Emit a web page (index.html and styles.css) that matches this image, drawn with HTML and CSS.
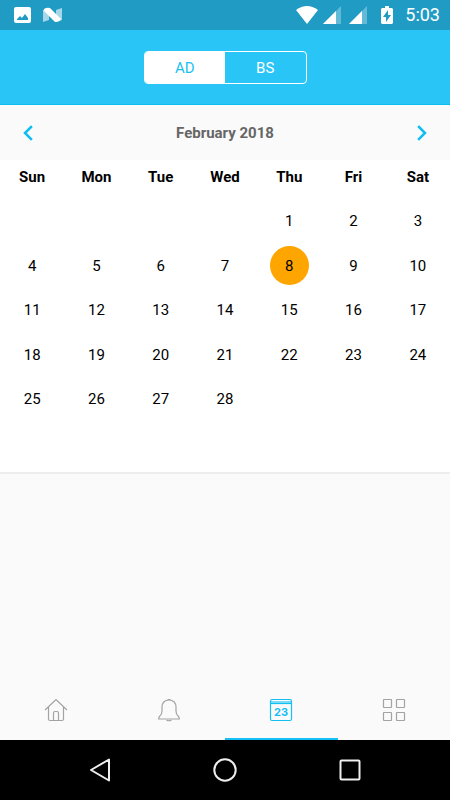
FILE: index.html
```html
<!DOCTYPE html>
<html lang="en">
<head>
  <meta charset="UTF-8">
  <meta name="viewport" content="width=device-width, initial-scale=1">
  <title>Calendar</title>
  <link rel="stylesheet" href="styles.css">
</head>
<body>
  <div class="statusbar">
    <div class="status-left">
      <svg width="17" height="17" viewBox="0 0 17 17">
        <path fill="#fff" fill-rule="evenodd" d="M2 0h13a2 2 0 0 1 2 2v12a2 2 0 0 1-2 2H2a2 2 0 0 1-2-2V2a2 2 0 0 1 2-2zM3 13h11v-2l-3-4-3 4-2-2-3 3z"/>
      </svg>
      <svg width="19" height="16" viewBox="0 0 19 16">
        <path fill="#a5d7e8" d="M0 3l6-2v12l-6 2zM13 3l6-2v12l-6 2z"/>
        <path fill="#fff" d="M1 2Q4 0 7 1l11 11q-1 3-6 3L1 4z"/>
      </svg>
    </div>
    <div class="status-right">
      <svg width="22" height="18" viewBox="0 0 22 18">
        <path fill="#fff" d="M0 4Q11-4 22 4L11 18z"/>
      </svg>
      <svg class="signal" width="18" height="18" viewBox="0 0 18 18">
        <path fill="#62bad6" d="M18 0v18H0z"/>
        <path fill="#fff" d="M13 5v13H0z"/>
      </svg>
      <svg class="signal" width="18" height="18" viewBox="0 0 18 18">
        <path fill="#62bad6" d="M18 0v18H0z"/>
        <path fill="#fff" d="M13 5v13H0z"/>
      </svg>
      <svg class="battery" width="12" height="18" viewBox="0 0 12 18">
        <path fill="#fff" d="M4 0h4v2h3l1 1v14l-1 1H1l-1-1V3l1-1h3z"/>
        <path fill="#209bc3" d="M7 4l-5 7h3v5l5-7H7z"/>
      </svg>
      <span class="clock">5:03</span>
    </div>
  </div>

  <header class="header">
    <div class="switch">
      <button type="button" class="switch-btn active" aria-pressed="true">AD</button>
      <button type="button" class="switch-btn" aria-pressed="false">BS</button>
    </div>
  </header>

  <main class="content">
    <div class="month">
      <button type="button" class="arrow" aria-label="Previous month">
        <svg width="12" height="18" viewBox="0 0 12 18"><path d="M10 3L4 9l6 6"/></svg>
      </button>
      <h1 class="month-name">February 2018</h1>
      <button type="button" class="arrow" aria-label="Next month">
        <svg width="12" height="18" viewBox="0 0 12 18"><path d="M2 3l6 6-6 6"/></svg>
      </button>
    </div>

    <div class="calendar">
      <table class="days">
        <thead>
          <tr><th>Sun</th><th>Mon</th><th>Tue</th><th>Wed</th><th>Thu</th><th>Fri</th><th>Sat</th></tr>
        </thead>
        <tbody>
          <tr>
            <td></td><td></td><td></td><td></td>
            <td><button type="button" class="day">1</button></td>
            <td><button type="button" class="day">2</button></td>
            <td><button type="button" class="day">3</button></td>
          </tr>
          <tr>
            <td><button type="button" class="day">4</button></td>
            <td><button type="button" class="day">5</button></td>
            <td><button type="button" class="day">6</button></td>
            <td><button type="button" class="day">7</button></td>
            <td><button type="button" class="day today">8</button></td>
            <td><button type="button" class="day">9</button></td>
            <td><button type="button" class="day">10</button></td>
          </tr>
          <tr>
            <td><button type="button" class="day">11</button></td>
            <td><button type="button" class="day">12</button></td>
            <td><button type="button" class="day">13</button></td>
            <td><button type="button" class="day">14</button></td>
            <td><button type="button" class="day">15</button></td>
            <td><button type="button" class="day">16</button></td>
            <td><button type="button" class="day">17</button></td>
          </tr>
          <tr>
            <td><button type="button" class="day">18</button></td>
            <td><button type="button" class="day">19</button></td>
            <td><button type="button" class="day">20</button></td>
            <td><button type="button" class="day">21</button></td>
            <td><button type="button" class="day">22</button></td>
            <td><button type="button" class="day">23</button></td>
            <td><button type="button" class="day">24</button></td>
          </tr>
          <tr>
            <td><button type="button" class="day">25</button></td>
            <td><button type="button" class="day">26</button></td>
            <td><button type="button" class="day">27</button></td>
            <td><button type="button" class="day">28</button></td>
            <td></td><td></td><td></td>
          </tr>
          <tr><td></td><td></td><td></td><td></td><td></td><td></td><td></td></tr>
        </tbody>
      </table>
    </div>
  </main>

  <nav class="tabs">
    <a href="#home" class="tab" aria-label="Home">
      <svg width="24" height="24" viewBox="0 0 24 24">
        <path d="M1 12L12 1.500l11 10.500M4.500 9v12q0 1.500 1.500 1.500h12q1.500 0 1.500-1.500V9M9.500 22v-7q0-1.500 1.500-1.500h2q1.500 0 1.500 1.500v7"/>
      </svg>
    </a>
    <a href="#notifications" class="tab" aria-label="Notifications">
      <svg width="24" height="24" viewBox="0 0 24 24">
        <path d="M12 2C7.500 2 5 5 5 9v4c0 3-.8 4-2.300 5.200-.7.600-1 1.200-1 2.800h20.600c0-1.600-.3-2.200-1-2.800C19.800 17 19 16 19 13V9c0-4-2.500-7-7-7z"/>
        <path d="M10.500 1.500h3M9.500 22q2.500 1.500 5 0"/>
      </svg>
    </a>
    <a href="#calendar" class="tab selected" aria-label="Calendar">
      <svg width="24" height="24" viewBox="0 0 24 24">
        <rect class="band" x="1" y="3" width="22" height="2"/>
        <rect x="1.500" y="1.500" width="21" height="21" rx="1.500"/>
        <path d="M1.500 5.500h21"/>
        <text class="tab-date" x="12" y="18" text-anchor="middle">23</text>
      </svg>
    </a>
    <a href="#more" class="tab" aria-label="More">
      <svg width="24" height="24" viewBox="0 0 24 24">
        <rect x="1.500" y="1.500" width="8" height="8" rx=".5"/>
        <rect x="14.500" y="1.500" width="8" height="8" rx=".5"/>
        <rect x="1.500" y="14.500" width="8" height="8" rx=".5"/>
        <rect x="14.500" y="14.500" width="8" height="8" rx=".5"/>
      </svg>
    </a>
  </nav>

  <div class="navbar">
    <button type="button" class="nav-btn" aria-label="Back">
      <svg width="26" height="26" viewBox="0 0 26 26"><path d="M22 2.500v21L4 13z"/></svg>
    </button>
    <button type="button" class="nav-btn" aria-label="Home screen">
      <svg width="26" height="26" viewBox="0 0 26 26"><circle cx="13" cy="13" r="10.700"/></svg>
    </button>
    <button type="button" class="nav-btn" aria-label="Recent apps">
      <svg width="26" height="26" viewBox="0 0 26 26"><rect x="3.500" y="3.500" width="19" height="19" rx="1"/></svg>
    </button>
  </div>
</body>
</html>
```
FILE: styles.css
```css
* {
  box-sizing: border-box;
}
body {
  margin: 0;
  min-height: 100vh;
  display: flex;
  flex-direction: column;
  font-family: Roboto, sans-serif;
  font-size: 15px;
  color: #000;
  background-color: #fafafa;
}
button {
  padding: 0;
  border: none;
  background: none;
  font: inherit;
  color: inherit;
  cursor: pointer;
}
svg {
  display: block;
}

.statusbar {
  height: 30px;
  padding: 0 10px 0 14px;
  display: flex;
  align-items: center;
  justify-content: space-between;
  background-color: #209bc3;
}
.status-left {
  display: flex;
  align-items: center;
  gap: 12px;
}
.status-right {
  display: flex;
  align-items: center;
}
.signal {
  margin-left: 5px;
}
.signal + .signal {
  margin-left: 8px;
}
.battery {
  margin: 0 12px 0 14px;
}
.clock {
  font-size: 18px;
  line-height: 32px;
  color: #fff;
}

.header {
  height: 75px;
  display: flex;
  align-items: center;
  justify-content: center;
  background-color: #29c5f6;
  border-bottom: 1px solid #0cbdf0;
}
.switch {
  width: 163px;
  height: 33px;
  display: flex;
  border: 1px solid #fff;
  border-radius: 4px;
  overflow: hidden;
}
.switch-btn {
  flex: 1;
  padding-top: 2px;
  color: #fff;
}
.switch-btn.active {
  background-color: #fff;
  color: #1dbff3;
}

.content {
  flex: 1;
}
.month {
  height: 55px;
  padding: 0 16px;
  display: flex;
  align-items: center;
  justify-content: space-between;
}
.month-name {
  margin: 0;
  font-size: 15px;
  font-weight: bold;
  color: #666;
}
.arrow {
  width: 22px;
  height: 32px;
  display: flex;
  align-items: center;
  justify-content: center;
}
.arrow path {
  fill: none;
  stroke: #0fbdf3;
  stroke-width: 2.5;
  stroke-linecap: square;
}

.calendar {
  padding-bottom: 6px;
  background-color: #fff;
  border-bottom: 2px solid #eee;
}
.days {
  width: 100%;
  table-layout: fixed;
  border-collapse: collapse;
  text-align: center;
}
.days th {
  height: 39px;
  padding: 0 0 6px;
  font-weight: bold;
}
.days td {
  height: 44px;
  padding: 0;
}
.days tr:nth-child(even) td {
  height: 45px;
}
.day {
  display: block;
  width: 39px;
  height: 39px;
  margin: 0 auto;
  border-radius: 50%;
}
.day.today {
  background-color: #ffa500;
}

.tabs {
  height: 60px;
  display: flex;
}
.tab {
  flex: 1;
  padding-top: 2px;
  display: flex;
  align-items: center;
  justify-content: center;
  border-bottom: 2px solid transparent;
  color: #a3a3a3;
}
.tab svg {
  fill: none;
  stroke: currentColor;
  stroke-width: 1.2;
}
.tab.selected {
  color: #16bff3;
  border-bottom-color: #16bff3;
}
.tab .band {
  fill: #7fdcf8;
  stroke: none;
}
.tab-date {
  font-family: Inter, sans-serif;
  font-size: 11px;
  font-weight: bold;
  fill: currentColor;
  stroke: none;
}

.navbar {
  height: 60px;
  padding: 0 37px;
  display: flex;
  background-color: #000;
}
.nav-btn {
  flex: 1;
  display: flex;
  align-items: center;
  justify-content: center;
}
.nav-btn path,
.nav-btn circle,
.nav-btn rect {
  fill: none;
  stroke: #eee;
  stroke-width: 2;
  stroke-linejoin: round;
}
```
